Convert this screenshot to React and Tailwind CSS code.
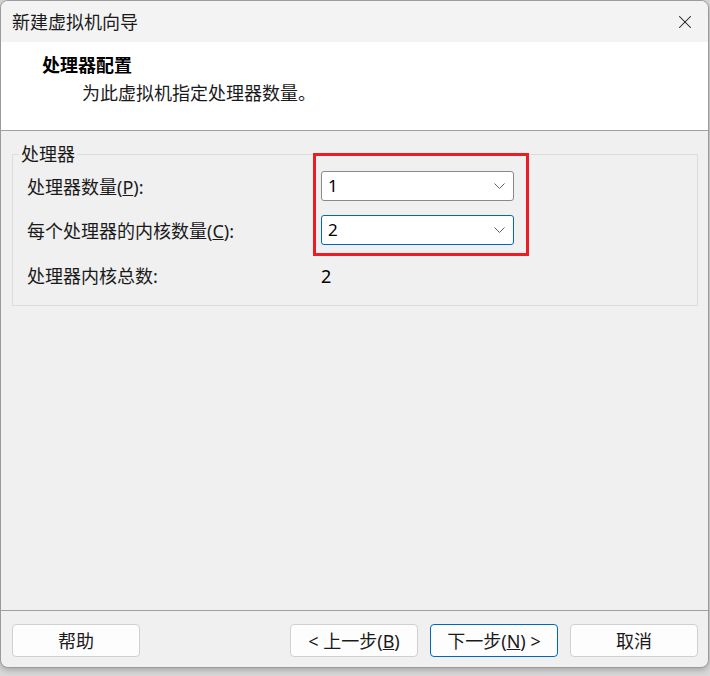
import { X } from 'lucide-react'

const font = { fontFamily: '"Noto Sans", "Noto Sans CJK SC", sans-serif' }

function Combo({ value, focused }) {
  return (
    <div
      className={
        'flex items-center justify-between h-[30px] w-[193px] rounded-[3px] bg-white pl-[6px] pr-[8px] border ' +
        (focused ? 'border-[#0067c0]' : 'border-[#8a8a8a]')
      }
    >
      <span className="text-[17px] leading-[20px] text-black">{value}</span>
      <svg width="11" height="6" viewBox="0 0 11 6" fill="none">
        <path d="M0.5 0.5 L5.5 5.5 L10.5 0.5" stroke="#5f5f5f" strokeWidth="1" />
      </svg>
    </div>
  )
}

function Button({ children, primary }) {
  return (
    <button
      type="button"
      className={
        'h-[33px] w-[128px] rounded-[4px] bg-[#fdfdfd] text-[18px] leading-[20px] text-[#1a1a1a] border ' +
        (primary ? 'border-[#0067c0]' : 'border-[#d0d0d0]')
      }
    >
      {children}
    </button>
  )
}

export default function App() {
  return (
    <div className="h-[676px] w-[710px] bg-[#d9d9d9] overflow-hidden" style={font}>
      <div className="relative flex flex-col h-[668px] w-[709px] rounded-[8px] border border-[#9b9b9b] bg-[#f0f0f0] overflow-hidden shadow-[0_2px_6px_rgba(0,0,0,0.25)]">
        {/* 标题栏 */}
        <div className="flex items-center justify-between h-[41px] bg-[#f3f3f3] pl-[11px] pr-[12px]">
          <span className="text-[18px] leading-[22px] text-[#1a1a1a]">新建虚拟机向导</span>
          <X size={22} strokeWidth={1.1} className="text-[#1a1a1a]" />
        </div>

        {/* 页头 */}
        <div className="h-[89px] bg-white border-b border-[#a0a0a0] pl-[41px] pt-[13px]">
          <p className="m-0 text-[18px] leading-[20px] font-bold text-black">处理器配置</p>
          <p className="m-0 mt-[8px] pl-[40px] text-[18px] leading-[20px] text-[#1a1a1a]">为此虚拟机指定处理器数量。</p>
        </div>

        {/* 内容 */}
        <div className="flex-1 pl-[11px] pr-[10px] pt-[13px]">
          <fieldset className="border border-[#dcdcdc] pt-[7px] pb-[19px]">
            <legend className="ml-[6px] px-[2px] text-[18px] leading-[20px] text-[#1a1a1a]">处理器</legend>
            <div className="grid grid-cols-[294px_193px] items-center gap-y-[14px] pl-[14px] text-[18px] leading-[20px] text-[#1a1a1a]">
              <span className="mt-[2px]">处理器数量(<span className="underline">P</span>):</span>
              <Combo value="1" />
              <span className="mt-[2px]">每个处理器的内核数量(<span className="underline">C</span>):</span>
              <Combo value="2" focused />
              <span className="mt-[7px]">处理器内核总数:</span>
              <span className="mt-[7px] text-black">2</span>
            </div>
          </fieldset>
        </div>

        {/* 按钮 */}
        <div className="flex items-center border-t border-[#a0a0a0] pl-[11px] pr-[10px] pt-[13px] pb-[10px]">
          <Button>帮助</Button>
          <div className="ml-auto flex gap-[12px]">
            <Button>&lt; 上一步(<span className="underline">B</span>)</Button>
            <Button primary>下一步(<span className="underline">N</span>) &gt;</Button>
            <Button>取消</Button>
          </div>
        </div>

        {/* 标注框 */}
        <div className="absolute left-[312px] top-[152px] h-[103px] w-[216px] border-[3px] border-[#ed1c24]" />
      </div>
    </div>
  )
}
